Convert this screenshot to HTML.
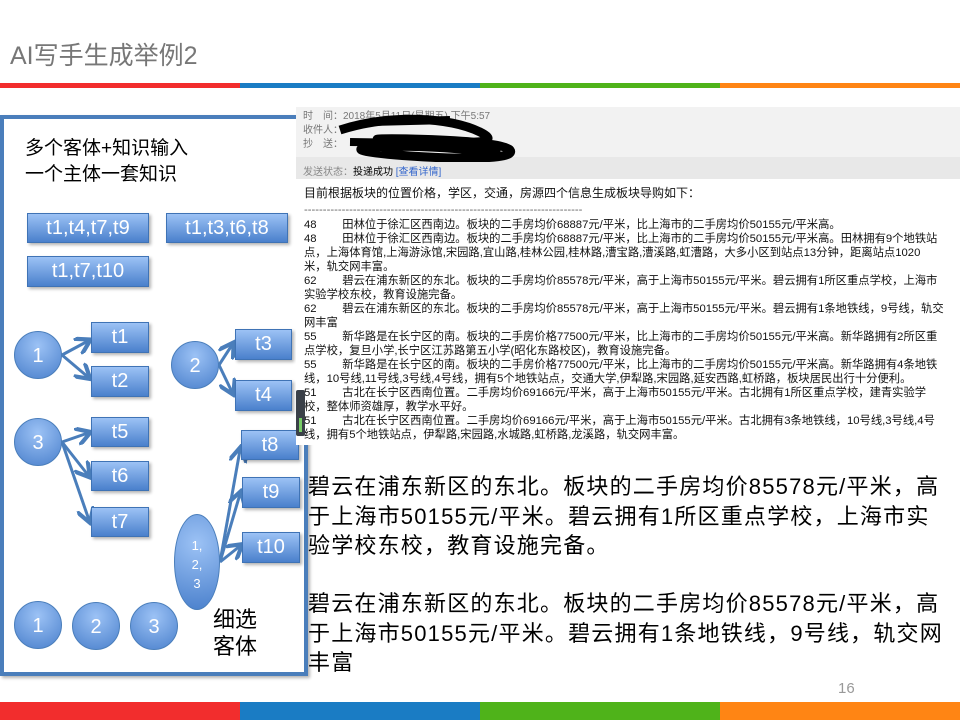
<!DOCTYPE html>
<html><head><meta charset="utf-8"><style>
*{margin:0;padding:0;box-sizing:border-box}
body{width:960px;height:720px;position:relative;overflow:hidden;background:#fff;font-family:"Liberation Sans","Noto Sans CJK SC",sans-serif}
.a{position:absolute}
.bx{position:absolute;background:linear-gradient(#9cc2f5,#4a80cc);border:1px solid #3f73b5;color:#fff;text-align:center;font-size:20px;box-shadow:2px 2px 3px rgba(0,0,0,.3)}
.c{position:absolute;border-radius:50%;background:radial-gradient(circle at 50% 30%,#9cc2f5,#4a80cc);border:1px solid #4a7ebb;color:#fff;text-align:center;font-size:20px}
.sl{position:absolute;left:304px;font-size:11.3px;line-height:14px;white-space:nowrap;color:#111;font-family:"Liberation Sans","WenQuanYi Zen Hei",sans-serif}
.bg{position:absolute;left:308px;font-size:22px;letter-spacing:1.2px;white-space:nowrap;color:#000;font-family:"Liberation Sans","Noto Sans CJK SC",sans-serif}
</style></head><body>
<div class="a" style="left:10px;top:36px;font-size:25px;color:#777">AI写手生成举例2</div>
<div class="a" style="top:83px;left:0;width:240px;height:5px;background:#f22d2d"></div>
<div class="a" style="top:83px;left:240px;width:240px;height:5px;background:#1a7cc4"></div>
<div class="a" style="top:83px;left:480px;width:240px;height:5px;background:#4fb31a"></div>
<div class="a" style="top:83px;left:720px;width:240px;height:5px;background:#ff8514"></div>
<div class="a" style="top:702px;left:0;width:240px;height:18px;background:#f22d2d"></div>
<div class="a" style="top:702px;left:240px;width:240px;height:18px;background:#1a7cc4"></div>
<div class="a" style="top:702px;left:480px;width:240px;height:18px;background:#4fb31a"></div>
<div class="a" style="top:702px;left:720px;width:240px;height:18px;background:#ff8514"></div>
<div class="a" style="left:838px;top:680px;font-size:15px;color:#999">16</div>

<!-- left frame -->
<div class="a" style="left:0;top:115px;width:308px;height:561px;border:4px solid #4a7ebb;box-shadow:2px 2px 3px rgba(0,0,0,.3)"></div>
<div class="a" style="left:25px;top:136px;font-size:19px;line-height:26px;color:#000">多个客体+知识输入<br>一个主体一套知识</div>
<div class="bx" style="left:27px;top:213px;width:122px;height:30px;line-height:28px">t1,t4,t7,t9</div>
<div class="bx" style="left:166px;top:213px;width:122px;height:30px;line-height:28px">t1,t3,t6,t8</div>
<div class="bx" style="left:27px;top:256px;width:122px;height:31px;line-height:29px">t1,t7,t10</div>

<svg class="a" style="left:0;top:0" width="310" height="700">
<defs><marker id="m" markerWidth="6" markerHeight="6" refX="4" refY="3" orient="auto"><path d="M0 0 L5 3 L0 6" fill="none" stroke="#4a7ebb" stroke-width="1.4"/></marker></defs>
<g stroke="#4a7ebb" stroke-width="3" marker-end="url(#m)">
<line x1="62" y1="355" x2="88" y2="341"/><line x1="62" y1="355" x2="88" y2="377"/>
<line x1="219" y1="365" x2="232" y2="345"/><line x1="219" y1="365" x2="232" y2="392"/>
<line x1="62" y1="442" x2="88" y2="433"/><line x1="62" y1="442" x2="88" y2="475"/><line x1="62" y1="442" x2="89" y2="520"/>
<line x1="220" y1="562" x2="240" y2="450"/><line x1="220" y1="562" x2="240" y2="494"/><line x1="220" y1="562" x2="240" y2="546"/>
</g></svg>
<div class="c" style="left:14px;top:331px;width:48px;height:48px;line-height:48px">1</div>
<div class="c" style="left:171px;top:341px;width:48px;height:48px;line-height:48px">2</div>
<div class="c" style="left:14px;top:418px;width:48px;height:48px;line-height:48px">3</div>
<div class="c" style="left:174px;top:514px;width:46px;height:96px;font-size:13px;line-height:19px;padding-top:21px">1,<br>2,<br>3</div>
<div class="c" style="left:14px;top:601px;width:48px;height:48px;line-height:48px">1</div>
<div class="c" style="left:72px;top:602px;width:48px;height:48px;line-height:48px">2</div>
<div class="c" style="left:130px;top:602px;width:48px;height:48px;line-height:48px">3</div>
<div class="bx" style="left:91px;top:322px;width:58px;height:31px;line-height:29px">t1</div>
<div class="bx" style="left:91px;top:366px;width:58px;height:31px;line-height:29px">t2</div>
<div class="bx" style="left:235px;top:329px;width:57px;height:31px;line-height:29px">t3</div>
<div class="bx" style="left:235px;top:380px;width:57px;height:31px;line-height:29px">t4</div>
<div class="bx" style="left:91px;top:417px;width:58px;height:30px;line-height:28px">t5</div>
<div class="bx" style="left:91px;top:461px;width:58px;height:30px;line-height:28px">t6</div>
<div class="bx" style="left:91px;top:507px;width:58px;height:30px;line-height:28px">t7</div>
<div class="bx" style="left:241px;top:430px;width:58px;height:30px;line-height:28px">t8</div>
<div class="bx" style="left:242px;top:477px;width:58px;height:31px;line-height:29px">t9</div>
<div class="bx" style="left:242px;top:532px;width:58px;height:31px;line-height:29px">t10</div>
<div class="a" style="left:213px;top:606px;font-size:22px;line-height:27px;color:#000">细选<br>客体</div>

<!-- screenshot (on top) -->
<div class="a" style="left:296px;top:100px;width:664px;height:345px;background:#fff"></div>
<div class="a" style="left:296px;top:107px;width:664px;height:50px;background:#f2f2f2"></div>
<div class="a" style="left:296px;top:157px;width:664px;height:22px;background:#e8e8e8"></div>
<div class="a" style="left:303px;top:110px;font-size:10px;line-height:14px;color:#777;font-family:'Liberation Sans','WenQuanYi Zen Hei',sans-serif">时　间：2018年5月11日(星期五) 下午5:57<br>收件人：<br>抄　送：</div>
<div class="a" style="left:303px;top:163px;font-size:10px;color:#888;font-family:'Liberation Sans','WenQuanYi Zen Hei',sans-serif">发送状态：<span style="color:#000">投递成功</span> <span style="color:#36c">[查看详情]</span></div>
<svg class="a" style="left:330px;top:112px" width="200" height="50"><path d="M10 18 C60 2,120 5,150 20 S120 30,60 28 S170 25,180 38 S80 46,40 40 S100 30,170 42" stroke="#000" stroke-width="9" fill="none"/><path d="M40 10 L120 8 M20 30 L150 32" stroke="#000" stroke-width="8"/></svg>
<div class="sl" style="top:186px;font-size:12px">目前根据板块的位置价格，学区，交通，房源四个信息生成板块导购如下：</div>
<div class="sl" style="top:203px;color:#666">--------------------------------------------------------------------------</div>
<div class="sl" style="top:218px">48　　 田林位于徐汇区西南边。板块的二手房均价68887元/平米，比上海市的二手房均价50155元/平米高。<br>48　　 田林位于徐汇区西南边。板块的二手房均价68887元/平米，比上海市的二手房均价50155元/平米高。田林拥有9个地铁站<br>点，上海体育馆,上海游泳馆,宋园路,宜山路,桂林公园,桂林路,漕宝路,漕溪路,虹漕路，大多小区到站点13分钟，距离站点1020<br>米，轨交网丰富。<br>62　　 碧云在浦东新区的东北。板块的二手房均价85578元/平米，高于上海市50155元/平米。碧云拥有1所区重点学校，上海市<br>实验学校东校，教育设施完备。<br>62　　 碧云在浦东新区的东北。板块的二手房均价85578元/平米，高于上海市50155元/平米。碧云拥有1条地铁线，9号线，轨交<br>网丰富<br>55　　 新华路是在长宁区的南。板块的二手房价格77500元/平米，比上海市的二手房均价50155元/平米高。新华路拥有2所区重<br>点学校，复旦小学,长宁区江苏路第五小学(昭化东路校区)，教育设施完备。<br>55　　 新华路是在长宁区的南。板块的二手房价格77500元/平米，比上海市的二手房均价50155元/平米高。新华路拥有4条地铁<br>线，10号线,11号线,3号线,4号线，拥有5个地铁站点，交通大学,伊犁路,宋园路,延安西路,虹桥路，板块居民出行十分便利。<br>51　　 古北在长宁区西南位置。二手房均价69166元/平米，高于上海市50155元/平米。古北拥有1所区重点学校，建青实验学<br>校，整体师资雄厚，教学水平好。<br>51　　 古北在长宁区西南位置。二手房均价69166元/平米，高于上海市50155元/平米。古北拥有3条地铁线，10号线,3号线,4号<br>线，拥有5个地铁站点，伊犁路,宋园路,水城路,虹桥路,龙溪路，轨交网丰富。</div>
<div class="a" style="left:296px;top:390px;width:9px;height:46px;background:#3a4048;border-radius:2px"></div>
<div class="a" style="left:299px;top:418px;width:3px;height:14px;background:#7c6"></div>

<div class="bg" style="top:472px;line-height:29.5px">碧云在浦东新区的东北。板块的二手房均价85578元/平米，高<br>于上海市50155元/平米。碧云拥有1所区重点学校，上海市实<br>验学校东校，教育设施完备。</div>
<div class="bg" style="top:589px;line-height:29.5px">碧云在浦东新区的东北。板块的二手房均价85578元/平米，高<br>于上海市50155元/平米。碧云拥有1条地铁线，9号线，轨交网<br>丰富</div>
</body></html>
